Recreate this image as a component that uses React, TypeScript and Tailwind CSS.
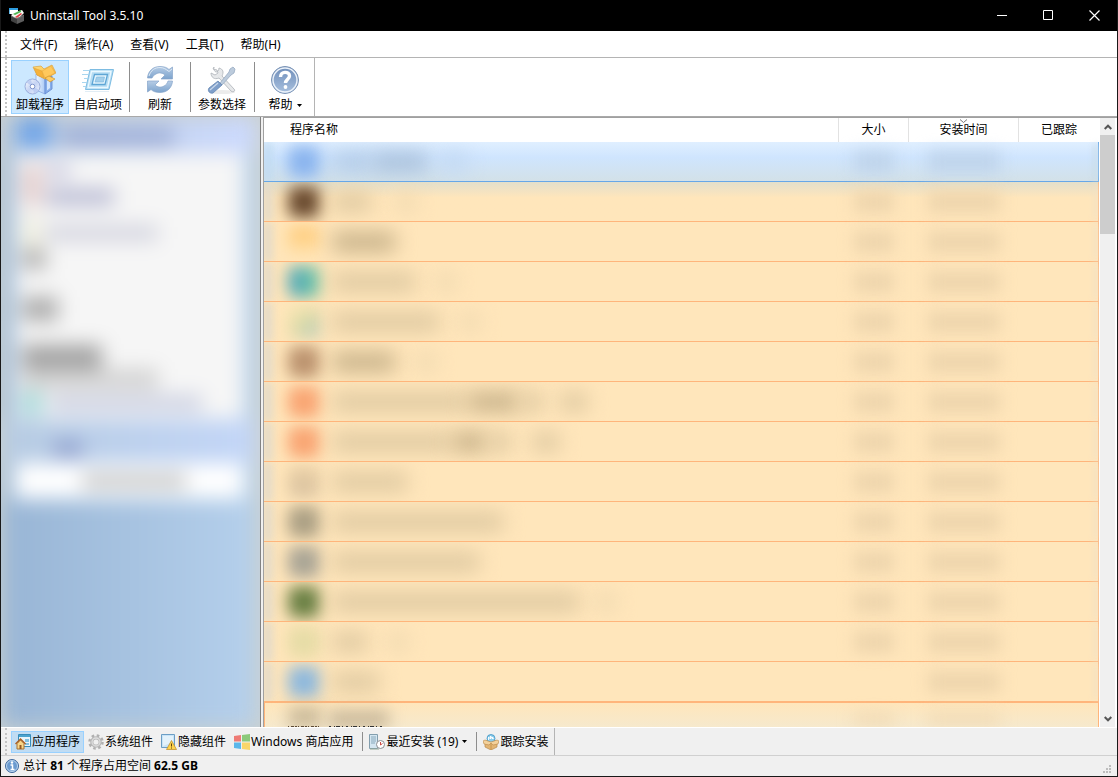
import type { ReactNode } from "react";

const font = "font-['Noto_Sans','Noto_Sans_CJK_SC',sans-serif]";

type Blob = { gap: string; width: string; color: string };
type Row = { icon: string; name: Blob[]; size: boolean; date: boolean };

const faint = "bg-[#f0d9b0]";
const mid = "bg-[#e0caa2]";
const dark = "bg-[#c9b38b]";

const rows: Row[] = [
  { icon: "bg-[#8ab4ee]", name: [{ gap: "ml-3", width: "w-10", color: "bg-[#b3cbe6]" }, { gap: "ml-0", width: "w-14", color: "bg-[#a9c0da]" }, { gap: "ml-3", width: "w-7", color: "bg-[#c2d8f2]" }], size: true, date: true },
  { icon: "bg-[#6a4a2f]", name: [{ gap: "ml-3", width: "w-10", color: mid }, { gap: "ml-6", width: "w-5", color: faint }], size: true, date: true },
  { icon: "bg-gradient-to-b from-[#ffc774] via-[#ffd48c] to-[#ffe6bb]", name: [{ gap: "ml-3", width: "w-16", color: dark }], size: true, date: true },
  { icon: "bg-gradient-to-r from-[#4fa3bd] to-[#74c9a2]", name: [{ gap: "ml-3", width: "w-21", color: mid }, { gap: "ml-5", width: "w-5", color: faint }], size: true, date: true },
  { icon: "bg-gradient-to-br from-[#fbeab5] via-[#dedaa7] to-[#9ec5c2]", name: [{ gap: "ml-3", width: "w-27", color: mid }, { gap: "ml-5", width: "w-5", color: faint }], size: true, date: true },
  { icon: "bg-[#bb926e]", name: [{ gap: "ml-3", width: "w-16", color: dark }, { gap: "ml-5", width: "w-5", color: faint }], size: true, date: true },
  { icon: "bg-[#f9a472]", name: [{ gap: "ml-3", width: "w-34", color: mid }, { gap: "ml-0", width: "w-13", color: dark }, { gap: "ml-0", width: "w-6", color: mid }, { gap: "ml-4", width: "w-7", color: mid }], size: true, date: true },
  { icon: "bg-[#f9a472]", name: [{ gap: "ml-3", width: "w-30", color: mid }, { gap: "ml-0", width: "w-9", color: dark }, { gap: "ml-0", width: "w-6", color: mid }, { gap: "ml-5", width: "w-7", color: mid }], size: true, date: true },
  { icon: "bg-gradient-to-b from-[#e8cda4] to-[#d8c1a0]", name: [{ gap: "ml-3", width: "w-19", color: mid }], size: true, date: true },
  { icon: "bg-[#ab9f84]", name: [{ gap: "ml-3", width: "w-43", color: mid }], size: true, date: true },
  { icon: "bg-[#a9a495]", name: [{ gap: "ml-3", width: "w-37", color: mid }], size: true, date: true },
  { icon: "bg-[#697f43]", name: [{ gap: "ml-3", width: "w-62", color: mid }, { gap: "ml-4", width: "w-5", color: faint }], size: true, date: true },
  { icon: "bg-[#e6dca6]", name: [{ gap: "ml-3", width: "w-9", color: mid }, { gap: "ml-5", width: "w-5", color: faint }], size: true, date: true },
  { icon: "bg-[#8db8dd]", name: [{ gap: "ml-3", width: "w-12", color: mid }], size: false, date: true },
];

function WindowsTitleIcon() {
  return (
    <svg className="size-4 shrink-0" viewBox="0 0 16 16">
      <path d="M0 0h9v6H0z" fill="#fff" /><path d="M0 0h9v2H0z" fill="#2e9de0" /><path d="M0 2h1v4H0z" fill="#6bbbe8" />
      <path d="m2 7 5-3 6-2 2 3-4 4-5 2z" fill="#f4f8ef" />
      <path d="m4 6 8-4v2L6 7z" fill="#4fb552" /><path d="m6 9 6-4 1 1-5 4z" fill="#e33b43" />
      <path d="m2 8 6 2.500V16l-6-3z" fill="#414141" /><path d="m8 10.500 7-3.500v6L8 16z" fill="#5d5d5d" /><path d="m2 8 6 2.500L15 7" fill="none" stroke="#999" strokeWidth=".6" />
    </svg>
  );
}

function UninstallIcon() {
  return (
    <svg className="size-8" viewBox="0 0 32 32">
      <defs>
        <linearGradient id="boxFace" x1="0" x2="1"><stop stopColor="#f2f8ff" /><stop offset="1" stopColor="#a9c9f5" /></linearGradient>
        <linearGradient id="flap" x1="0" y1="0" x2="1" y2="1"><stop stopColor="#ffdf82" /><stop offset="1" stopColor="#f8b43a" /></linearGradient>
        <linearGradient id="disc" x1="0" y1="0" x2="1" y2="1"><stop stopColor="#fff" /><stop offset=".5" stopColor="#c5d3f3" /><stop offset="1" stopColor="#f4f7ff" /></linearGradient>
      </defs>
      <path d="m12 10 9 5v15l-9-4z" fill="url(#boxFace)" stroke="#86a8e2" strokeWidth=".8" />
      <path d="m21 15 7-3v13l-7 5z" fill="#86aeea" stroke="#6388d1" strokeWidth=".8" />
      <path d="m23 17 3-2v9l-3 2.500z" fill="#d3e6fd" />
      <path d="m9 3 8-1 3 3 8-4 4 8-11 6-8-4z" fill="url(#flap)" stroke="#d8982b" strokeWidth=".6" />
      <path d="m10 4 8 3 2 7-7-3z" fill="#f6b23c" stroke="#dca03b" strokeWidth=".5" />
      <path d="m18 7 9-5 4 7-10 5z" fill="#ffc85c" stroke="#e5a63c" strokeWidth=".5" />
      <path d="m21 14 4-2 6 3-5 3z" fill="#ffcb60" stroke="#cf8e22" strokeWidth=".6" />
      <circle cx="8.500" cy="22.500" r="7.500" fill="url(#disc)" stroke="#8b9fd3" strokeWidth=".8" />
      <path d="M8.500 22.500 2.500 18.500A7.500 7.500 0 0 1 7 15.300zM8.500 22.500l6.500 3.200a7.500 7.500 0 0 1-5 4z" fill="#b0c3f0" opacity=".7" />
      <circle cx="8.500" cy="22.500" r="2.300" fill="#fff" stroke="#8195cb" />
    </svg>
  );
}

function AutorunIcon() {
  return (
    <svg className="size-8" viewBox="0 0 32 32">
      <g fill="none">
        <path d="M8 5.500h23.500L27 25.500H3.500z" fill="#b5dcf3" stroke="#7dbce2" />
        <path d="M9.500 7.500h19.500l-3.500 16H6z" stroke="#eaf8ff" strokeWidth="1.300" />
        <path d="M12.500 10.500h13l-2.500 10H10z" fill="#e6f5fd" stroke="#5fa6d5" strokeWidth="1.300" />
        <path d="M14.500 13h8l-1 5h-8.500z" fill="#a3cfeb" stroke="#7bb6de" strokeWidth=".6" />
        <path d="M1 6.500h6M0 10.500h6M2 14.500h4M0 18.500h5M1 22.500h3" stroke="#a9d6ef" />
        <path d="M3 27.500h24" stroke="#e1edf5" />
      </g>
    </svg>
  );
}

function RefreshIcon() {
  return (
    <svg className="size-8" viewBox="0 0 32 32">
      <defs><linearGradient id="refresh" x1="0" y1="0" x2="0" y2="1"><stop stopColor="#b7cde6" /><stop offset="1" stopColor="#7ca3cd" /></linearGradient></defs>
      <path d="M3.500 14C4 7 9 2.500 16 2.500c4 0 7 1 9 3L28.500 3v12H17l4-4c-2-2-6-3-9-1-2 1-3 2-4 4z" fill="url(#refresh)" stroke="#86a5ca" strokeWidth=".7" />
      <path d="M28.500 17C28 24 23 28.500 16 28.500c-4 0-7-1-9-3L3.500 28V17H15l-4 4c2 2 6 3 9 1 2-1 3-2 4-5z" fill="url(#refresh)" stroke="#86a5ca" strokeWidth=".7" />
      <path d="M5 12c2-6 6-8.500 11-8.500 4 0 6 2 9 4l3-2.500" fill="none" stroke="#dce8f4" />
    </svg>
  );
}

function ToolsIcon() {
  return (
    <svg className="size-8" viewBox="0 0 32 32">
      <ellipse cx="16" cy="28" rx="13" ry="2" fill="#ececec" />
      <path d="M8 3c-1 2 1 5 2 5s3-1 3-4c4 1 5 4 3 8l12 13c2 2-1 4-3 2L13 14c-5 2-8-1-8-5l4 2 3-2-1-3-4-1z" fill="#e6e8ea" stroke="#b4b9be" strokeWidth=".9" />
      <path d="m27 3 2 2-1 4-3 2-9 10-2-2 9-11 1-3z" fill="#bccbdc" stroke="#98abc2" strokeWidth=".8" />
      <path d="m12 17 4 4-9 8c-3 1-6-2-4-5z" fill="#7f9fca" stroke="#6486b3" strokeWidth=".8" />
      <path d="m12 19-8 7" stroke="#c9d8eb" strokeWidth="1.300" />
    </svg>
  );
}

function HelpIcon() {
  return (
    <svg className="size-8" viewBox="0 0 32 32">
      <defs><linearGradient id="help" x1="0" y1="0" x2="0" y2="1"><stop stopColor="#6e8db9" /><stop offset="1" stopColor="#a9c1df" /></linearGradient></defs>
      <circle cx="16" cy="16" r="13.500" fill="url(#help)" stroke="#7b94b6" />
      <circle cx="16" cy="16" r="12" fill="none" stroke="#edf3fa" strokeWidth="1.400" />
      <path d="M11.500 13c0-6 9-6 9-1 0 3-4 3.500-4 7" fill="none" stroke="#fff" strokeWidth="3.400" />
      <circle cx="16.500" cy="23" r="1.900" fill="#fff" />
    </svg>
  );
}

function HomeAppIcon() {
  return (
    <svg className="size-4 shrink-0" viewBox="0 0 16 16">
      <path d="M3.500.5h12v12h-12z" fill="#e8f5fc" stroke="#368cba" /><path d="M4 1h11v2H4z" fill="#4ba3cf" />
      <path d="M10 5h4v3h-4zM10 9h4v2h-4z" fill="#81c1e2" />
      <path d="M2 9.500 5.500 6 9 9.500V15H2z" fill="#f8d588" stroke="#a87331" /><path d="m.500 10 5-5 5 5" fill="none" stroke="#aa6026" strokeWidth="1.500" /><path d="M4.500 11h2v4h-2z" fill="#965b27" />
    </svg>
  );
}

function GearIcon() {
  return (
    <svg className="size-4 shrink-0" viewBox="0 0 16 16">
      <circle cx="8" cy="8" r="6.500" fill="none" stroke="#b0b0b0" strokeWidth="2.500" strokeDasharray="2.550 2.550" />
      <circle cx="8" cy="8" r="4.200" fill="none" stroke="#b7b7b7" strokeWidth="3.200" /><circle cx="8" cy="8" r="4" fill="none" stroke="#dedede" strokeWidth="1.300" />
    </svg>
  );
}

function HiddenIcon() {
  return (
    <svg className="size-4 shrink-0" viewBox="0 0 16 16">
      <path d="M.5.500h13v13H.5z" fill="#c9e4f7" stroke="#6b9ec5" /><path d="M2 2h10v6L2 12z" fill="#e3f2fb" />
      <path d="m10.500 6.500 5 9h-10z" fill="#ffd34c" stroke="#c39331" strokeWidth=".8" /><path d="M10.500 9.500v3m0 1v1" stroke="#614411" />
    </svg>
  );
}

function StoreIcon() {
  return (
    <svg className="size-4 shrink-0" viewBox="0 0 16 16">
      <path d="m0 2 7-1v6.500H0z" fill="#ee7b75" /><path d="m8 1 8-1v7.500H8z" fill="#8cc97a" /><path d="M0 8.500h7V15l-7-1z" fill="#5bb7ea" /><path d="M8 8.500h8V16l-8-1z" fill="#fad669" />
    </svg>
  );
}

function RecentIcon() {
  return (
    <svg className="size-4 shrink-0" viewBox="0 0 16 16">
      <path d="M.5.500h8v14h-8z" fill="#d4e6f1" stroke="#829eae" /><path d="M2 3h5M2 5h5M2 7h5M2 9h4" stroke="#88a8bb" /><path d="M1 15h9" stroke="#91a796" />
      <circle cx="11.500" cy="10.500" r="4" fill="#fff" stroke="#8a8d91" /><path d="M11.500 8v3l2-1.500" fill="none" stroke="#cf4c45" />
    </svg>
  );
}

function TrackIcon() {
  return (
    <svg className="size-4 shrink-0" viewBox="0 0 16 16">
      <path d="M2 7h12v6l-6 3-6-3z" fill="#e3b574" stroke="#b98a4b" strokeWidth=".7" />
      <path d="M8 9v7" stroke="#c8964f" />
      <circle cx="8" cy="4.500" r="4" fill="#8ccdec" stroke="#4094c3" strokeWidth=".8" />
      <path d="M5.500 6V3l2 2V2l2 3V3l1 2" fill="none" stroke="#fff" strokeWidth=".9" />
      <path d="m2 6-2 1 1 3 5 1 2-2 2 2 5-1 1-3-2-1-6 2z" fill="#f3d19b" stroke="#b88648" strokeWidth=".6" />
    </svg>
  );
}

function InfoIcon() {
  return (
    <svg className="size-4 shrink-0" viewBox="0 0 16 16">
      <circle cx="8" cy="8" r="6.500" fill="#6b9bd0" stroke="#426b9e" /><circle cx="8" cy="8" r="5.500" fill="none" stroke="#b9d3ed" />
      <path d="M6.500 7H8.500v4M6.500 11.500h4" fill="none" stroke="#fff" strokeWidth="1.500" /><circle cx="8" cy="4.500" r="1.200" fill="#fff" />
    </svg>
  );
}

function Caret() {
  return <svg className="h-[3px] w-[5px] shrink-0" viewBox="0 0 5 3"><path d="M0 0h5L2.500 3z" fill="#000" /></svg>;
}

function Grip() {
  return <div className="ml-[4px] mr-[4px] w-0 shrink-0 self-stretch border-l-2 border-dotted border-[#c4c4c4]" />;
}

function ToolButton({ icon, label, active, caret }: { icon: ReactNode; label: string; active?: boolean; caret?: boolean }) {
  return (
    <button className={`flex h-[54px] min-w-[58px] flex-col items-center border px-1 pt-[3px] ${active ? "border-[#99d1ff] bg-[#cce8ff]" : "border-transparent"}`}>
      {icon}
      <span className="mt-px flex items-center gap-1 leading-4">{label}{caret && <Caret />}</span>
    </button>
  );
}

function Separator({ spacing }: { spacing: string }) {
  return <div className={`my-1 w-px shrink-0 self-stretch bg-[#8d8d8d] ${spacing}`} />;
}

function Tab({ icon, label, active, caret }: { icon: ReactNode; label: string; active?: boolean; caret?: boolean }) {
  return (
    <button className={`flex h-[22px] items-center gap-px whitespace-nowrap border px-[3px] ${active ? "border-[#99d1ff] bg-[#c0dcf3]" : "border-transparent"}`}>
      {icon}<span>{label}</span>{caret && <span className="ml-[3px]"><Caret /></span>}
    </button>
  );
}

function Sidebar() {
  return (
    <aside className="w-[260px] shrink-0 overflow-hidden border-r border-[#828282] bg-[#cbd1d0]">
      <div className="ml-px mr-1 flex h-full flex-col bg-gradient-to-r from-[#98b5d5] to-[#b5d0ec] blur-[10px]">
        <div className="flex h-9 shrink-0 items-start bg-gradient-to-r from-[#b7c9dc] to-[#ccdaff] pl-4">
          <div className="h-8 w-8 bg-[#6fa4e8]" />
          <div className="ml-3 mt-3 h-4 w-28 bg-[#99a9d3]" />
        </div>
        <div className="mx-3 flex h-[266px] shrink-0 flex-col bg-[#f6f6f6] pl-2">
          <div className="mt-3 flex h-10 items-start">
            <div className="h-10 w-5 bg-[#e6cfcd]" />
            <div className="ml-1 h-3 w-6 bg-[#c2c2dc]" />
          </div>
          <div className="-mt-4 ml-6 h-4 w-17 bg-[#b6b8d2]" />
          <div className="mt-3 flex h-8 items-center">
            <div className="h-8 w-5 bg-[#efefe0]" />
            <div className="ml-1 h-4 w-28 bg-[#d3d4df]" />
          </div>
          <div className="h-5 w-6 bg-[#b0b0b0]" />
          <div className="mt-7 h-6 w-9 bg-[#acacac]" />
          <div className="mt-6 h-6 w-20 bg-[#a2a2a2]" />
          <div className="h-5 w-34 bg-[#d2d2d2]" />
          <div className="mt-1 flex h-5 items-center">
            <div className="h-6 w-5 bg-[#a2d8d8]" />
            <div className="ml-2 h-4 w-38 bg-[#cdd1e2]" />
          </div>
        </div>
        <div className="flex h-11 shrink-0 items-center bg-gradient-to-r from-[#b6cbe2] to-[#c3d6f8] pl-13">
          <div className="mt-4 h-4 w-7 bg-[#8f9fcd]" />
        </div>
        <div className="mx-3 flex h-9 shrink-0 items-center bg-white pl-17">
          <div className="h-4 w-26 bg-[#c9c9c9]" />
        </div>
      </div>
    </aside>
  );
}

function Smudge({ selected, wide, clipped }: { selected: boolean; wide: boolean; clipped?: boolean }) {
  return <div className={`mx-auto blur-[8px] ${clipped ? "h-2" : "h-5"} ${wide ? "w-18" : "w-10"} ${selected ? "bg-[#bed3ea]" : "bg-[#edd4ac]"}`} />;
}

function ProgramTable() {
  return (
    <table className="w-full table-fixed border-separate border-spacing-0">
      <colgroup><col /><col className="w-[70px]" /><col className="w-[110px]" /><col className="w-[80px]" /></colgroup>
      <thead>
        <tr className="h-6 bg-white">
          <th className="border-r border-[#e2e2e2] pl-[26px] text-left font-normal">程序名称</th>
          <th className="border-r border-[#e2e2e2] font-normal">大小</th>
          <th className="relative border-r border-[#e2e2e2] font-normal">
            <svg className="absolute inset-x-0 top-px mx-auto h-1 w-[7px]" viewBox="0 0 7 4"><path d="m0 .5 3.500 3L7 .5" fill="none" stroke="#777" /></svg>
            安装时间
          </th>
          <th className="font-normal">已跟踪</th>
        </tr>
      </thead>
      <tbody>
        {rows.map((row, i) => {
          const line = i === 0 ? "border-b border-[#66a7e8]" : i === rows.length - 1 ? "border-b-2 border-[#ffb57b]" : "border-b border-[#ffb57b]";
          const fill = i === 0 ? "bg-gradient-to-b from-[#e0efff] via-[#cfe5fe] via-40% to-[#d3e1e8]" : i === 1 ? "bg-gradient-to-b from-[#e3dfcb] to-[#ffe6bb] to-40%" : "bg-[#ffe6bb]";
          const edge = i === 0 ? "border-[#66a7e8]" : "border-[#ffb57b]";
          return (
            <tr key={i} className="h-10">
              <td className={`overflow-hidden p-0 ${fill} ${line}`}>
                <div className="flex h-[39px] items-center">
                  <div className={`h-10 w-2 shrink-0 blur-[4px] ${i === 0 ? "bg-[#bed9f0]" : "bg-[#dfd9cc]"}`} />
                  <div className={`ml-4 h-8 w-8 shrink-0 rounded-lg blur-[8px] ${row.icon}`} />
                  {row.name.map((blob, n) => (
                    <div key={n} className={`h-5 shrink-0 rounded-md blur-[10px] ${blob.gap} ${blob.width} ${blob.color}`} />
                  ))}
                </div>
              </td>
              <td className={`p-0 ${fill} ${line}`}>{row.size && <Smudge selected={i === 0} wide={false} />}</td>
              <td className={`p-0 ${fill} ${line}`}>{row.date && <Smudge selected={i === 0} wide />}</td>
              <td className={`border-r p-0 ${fill} ${line} ${edge}`}>
                <div className={`ml-auto h-9 w-1 blur-[3px] ${i === 0 ? "bg-[#c8dae5]" : "bg-[#f0dfc4]"}`} />
              </td>
            </tr>
          );
        })}
        <tr className="h-10 bg-gradient-to-b from-[#ffe6bb] to-[#f6e9cd] to-60% align-top">
          <td className="border-l border-[#ffb57b] p-0">
            <div className="flex pt-1">
              <div className="ml-6 h-5 w-8 bg-[#c9b998] blur-[8px]" />
              <div className="ml-2 mt-1 h-4 w-15 bg-[#c6b597] blur-[8px]" />
            </div>
          </td>
          <td className="p-0 pt-3"><Smudge selected={false} wide={false} clipped /></td>
          <td className="p-0 pt-3"><Smudge selected={false} wide clipped /></td>
          <td className="border-r border-[#ffb57b] p-0" />
        </tr>
      </tbody>
    </table>
  );
}

function ScrollBar() {
  return (
    <div className="flex w-[18px] shrink-0 flex-col items-center border-l border-r-2 border-white bg-[#f0f0f0]">
      <button aria-label="向上滚动" className="flex h-[17px] w-full items-center justify-center">
        <svg className="h-[6px] w-2" viewBox="0 0 8 6"><path d="m.7 5 3.300-3.300L7.300 5" fill="none" stroke="#555" strokeWidth="2" /></svg>
      </button>
      <div className="h-[99px] w-full bg-[#cdcdcd]" />
      <button aria-label="向下滚动" className="mt-auto flex h-[17px] w-full items-center justify-center">
        <svg className="h-[6px] w-2" viewBox="0 0 8 6"><path d="m.7 1 3.300 3.300L7.300 1" fill="none" stroke="#555" strokeWidth="2" /></svg>
      </button>
    </div>
  );
}

export default function App() {
  return (
    <div lang="zh-CN" className={`flex h-screen flex-col border border-t-0 border-[#191919] bg-[#f0f0f0] text-[12px] leading-4 text-black ${font}`}>
      <header className="flex h-[31px] shrink-0 items-center bg-black pl-2 text-white">
        <WindowsTitleIcon />
        <h1 className="ml-[5px] flex-1">Uninstall Tool 3.5.10</h1>
        <button aria-label="最小化" className="flex h-full w-[46px] items-center justify-center"><svg className="size-[11px]" viewBox="0 0 11 11"><path d="M0 5.500h10" stroke="#fff" /></svg></button>
        <button aria-label="最大化" className="flex h-full w-[46px] items-center justify-center"><svg className="size-[11px]" viewBox="0 0 11 11"><path d="M.5.500h9v9h-9z" fill="none" stroke="#fff" /></svg></button>
        <button aria-label="关闭" className="flex h-full w-[46px] items-center justify-center"><svg className="size-[11px]" viewBox="0 0 11 11"><path d="m.5.500 10 10m0-10-10 10" stroke="#fff" strokeWidth="1.200" /></svg></button>
      </header>

      <nav className="flex h-[27px] shrink-0 items-center gap-px border-b border-[#b4b4b4] bg-white">
        <Grip />
        {["文件(F)", "操作(A)", "查看(V)", "工具(T)", "帮助(H)"].map((item) => (
          <button key={item} className="px-2 pt-[2px]">{item}</button>
        ))}
      </nav>

      <div className="flex h-[59px] shrink-0 border-b border-[#a9a9a9] bg-white">
        <Grip />
        <div className="flex items-center border-r border-[#b4b4b4]">
          <ToolButton icon={<UninstallIcon />} label="卸载程序" active />
          <ToolButton icon={<AutorunIcon />} label="自启动项" />
          <Separator spacing="ml-[2px] mr-px" />
          <ToolButton icon={<RefreshIcon />} label="刷新" />
          <Separator spacing="mx-px" />
          <div className="px-px"><ToolButton icon={<ToolsIcon />} label="参数选择" /></div>
          <Separator spacing="ml-[2px] mr-px" />
          <ToolButton icon={<HelpIcon />} label="帮助" caret />
        </div>
      </div>

      <main className="flex min-h-0 flex-1">
        <Sidebar />
        <section className="ml-[2px] flex min-w-0 flex-1 border-l border-t border-[#a0a0a0]">
          <div className="relative min-w-0 flex-1 overflow-hidden bg-[#ffe6bb]">
            <ProgramTable />
            <svg className="absolute bottom-0 left-6 h-[2px] w-[100px]" viewBox="0 0 100 2">
              <path d="M0 1.500h32" stroke="#5c4a35" strokeDasharray="1 2 3 1 2 1" />
              <path d="M41 1.500h56" stroke="#333" strokeDasharray="2 3 1 1 4 2 1 3" />
            </svg>
          </div>
          <ScrollBar />
        </section>
      </main>

      <div className="flex h-[29px] shrink-0 border-b border-t border-b-[#d0d0d0] border-t-white">
        <Grip />
        <div className="flex items-center border-r border-[#b4b4b4] pr-px">
          <Tab icon={<HomeAppIcon />} label="应用程序" active />
          <Tab icon={<GearIcon />} label="系统组件" />
          <Tab icon={<HiddenIcon />} label="隐藏组件" />
          <Tab icon={<StoreIcon />} label="Windows 商店应用" />
          <Separator spacing="ml-[5px] mr-[2px]" />
          <Tab icon={<RecentIcon />} label="最近安装 (19)" caret />
          <Separator spacing="ml-[5px] mr-[2px]" />
          <Tab icon={<TrackIcon />} label="跟踪安装" />
        </div>
      </div>

      <footer className="flex h-[20px] shrink-0 items-center pl-[3px]">
        <InfoIcon />
        <p className="ml-[3px] flex-1">总计 <b>81</b> 个程序占用空间 <b>62.5 GB</b></p>
        <svg className="mr-[3px] size-[11px] self-end" viewBox="0 0 11 11"><path d="M6 0h2v2H6zM3 3h2v2H3zM6 3h2v2H6zM0 6h2v2H0zM3 6h2v2H3zM6 6h2v2H6z" fill="#bdbdbd" /></svg>
      </footer>
    </div>
  );
}
